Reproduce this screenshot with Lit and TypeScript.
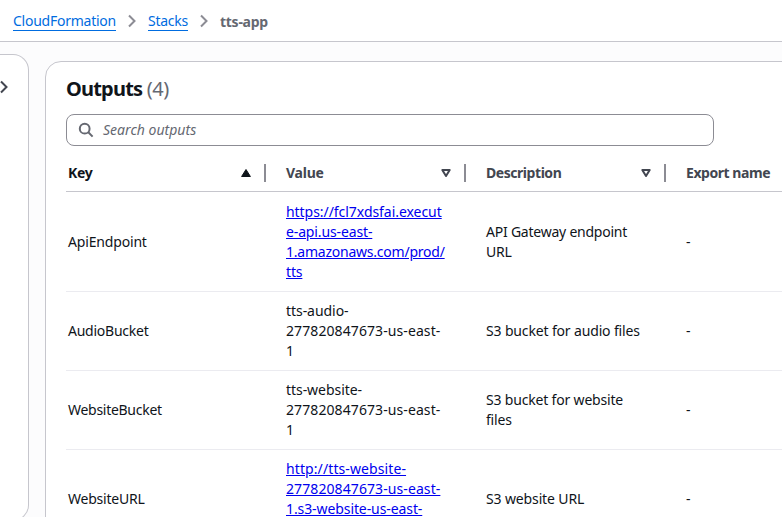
import { LitElement, html, css } from "lit";
import { customElement } from "lit/decorators.js";
import { styleMap } from "lit/directives/style-map.js";

/** A line of cell text with its tracking in px. */
type Line = [text: string, tracking: number];

interface Row {
  key: Line;
  value: Line[];
  link?: boolean;
  description: Line[];
}

const rows: Row[] = [
  {
    key: ["ApiEndpoint", -0.17],
    value: [
      ["https://fcl7xdsfai.execut", -0.05],
      ["e-api.us-east-", -0.13],
      ["1.amazonaws.com/prod/", -0.23],
      ["tts", -0.15],
    ],
    link: true,
    description: [["API Gateway endpoint", -0.23], ["URL", -0.25]],
  },
  {
    key: ["AudioBucket", -0.25],
    value: [["tts-audio-", -0.05], ["277820847673-us-east-", 0.09], ["1", 0]],
    description: [["S3 bucket for audio files", -0.15]],
  },
  {
    key: ["WebsiteBucket", -0.28],
    value: [["tts-website-", -0.05], ["277820847673-us-east-", 0.09], ["1", 0]],
    description: [["S3 bucket for website", -0.18], ["files", -0.2]],
  },
  {
    key: ["WebsiteURL", -0.22],
    value: [
      ["http://tts-website-", 0.1],
      ["277820847673-us-east-", 0.09],
      ["1.s3-website-us-east-", -0.09],
      ["1.amazonaws.com", -0.23],
    ],
    link: true,
    description: [["S3 website URL", -0.13]],
  },
];

const line = ([text, tracking]: Line) =>
  html`<span style=${styleMap({ letterSpacing: `${tracking}px` })}>${text}</span>`;

const lines = (parts: Line[]) => parts.map((p, i) => (i ? html`<br />${line(p)}` : line(p)));

const chevron = html`<svg class="chevron" width="16" height="16" viewBox="0 0 16 16">
  <path d="M5 2.5 L10.5 8 L5 13.5" />
</svg>`;

const sortNone = html`<svg class="sort" width="16" height="16" viewBox="0 0 16 16">
  <path class="hollow" d="M4.3 5 H11.7 L8 11 Z" />
</svg>`;

@customElement("app-root")
export class AppRoot extends LitElement {
  static styles = css`
    :host {
      display: flex;
      flex-direction: column;
      width: 100%;
      height: 517px;
      overflow: hidden;
      background: #fcfcfd;
      color: #0f141a;
      font: 14px/20px "Noto Sans", "Open Sans", sans-serif;
      letter-spacing: -0.25px;
    }
    * { box-sizing: border-box; }
    .crumbs {
      flex: none;
      height: 42px;
      display: flex;
      align-items: center;
      padding: 2px 0 0 13px;
      background: #fff;
      border-bottom: 1px solid #c6c6cd;
    }
    .crumb {
      color: #006ce0;
      text-decoration: none;
      border-bottom: 1px solid #006ce0;
      line-height: 18px;
      white-space: nowrap;
    }
    .current { color: #656871; font-weight: 700; }
    .chevron { fill: none; stroke: #8c8c94; stroke-width: 2; flex: none; }
    .crumbs .chevron { margin: 0 8px 2px; }
    .body { flex: 1; min-height: 0; display: flex; align-items: flex-start; }
    .side {
      flex: none;
      width: 29px;
      height: 467px;
      margin-top: 12px;
      padding-top: 24px;
      background: #fff;
      border: 1px solid #c6c6cd;
      border-left: 0;
      border-radius: 0 16px 16px 0;
    }
    .side .chevron { display: block; margin-left: -4px; stroke: #424650; }
    .card {
      flex: none;
      width: 790px;
      height: 600px;
      margin: 19px 0 0 16px;
      padding: 15px 0 0 20px;
      background: #fff;
      border: 1px solid #c6c6cd;
      border-radius: 16px;
    }
    h2 { margin: 0; font-size: 20px; line-height: 24px; font-weight: 700; letter-spacing: -0.8px; }
    .count { color: #656871; font-weight: 400; letter-spacing: -0.4px; }
    .search {
      display: flex;
      align-items: center;
      width: 648px;
      height: 32px;
      margin-top: 13px;
      padding-left: 11px;
      gap: 9px;
      border: 1px solid #8c8c94;
      border-radius: 8px;
      color: #656871;
      font-style: italic;
      letter-spacing: 0.02px;
    }
    .search svg { fill: none; stroke: #656871; stroke-width: 2; }
    .row {
      display: grid;
      grid-template-columns: 218px 200px 200px 130px;
      align-items: center;
      padding: 9px 0 9px 2px;
      border-bottom: 1px solid #ebebf0;
    }
    .row:nth-child(2) { padding-top: 10px; }
    .row.head {
      height: 46px;
      padding: 18px 0 0 2px;
      border-bottom-color: #c6c6cd;
      align-items: start;
      color: #424650;
      font-weight: 700;
      letter-spacing: -0.45px;
    }
    .th { display: flex; align-items: center; height: 18px; padding-right: 20px; white-space: nowrap; }
    .th.short { letter-spacing: -0.25px; }
    .th .sort { margin-left: auto; margin-right: 10px; }
    .divider { width: 2px; height: 18px; background: #8c8c94; }
    .active { color: #0f141a; }
    .full { fill: #0f141a; stroke: #0f141a; stroke-width: 1; stroke-linejoin: round; }
    .hollow { fill: none; stroke: #424650; stroke-width: 2; stroke-linejoin: round; }
    .cell { white-space: nowrap; }
    .url { color: #0000ee; text-decoration: underline; }
  `;

  render() {
    return html`
      <nav class="crumbs">
        <a class="crumb">CloudFormation</a>${chevron}<a class="crumb">Stacks</a>${chevron}<span class="current">tts-app</span>
      </nav>
      <div class="body">
        <aside class="side">${chevron}</aside>
        <main class="card">
          <h2>Outputs <span class="count">(4)</span></h2>
          <div class="search">
            <svg width="16" height="16" viewBox="0 0 16 16">
              <circle cx="6.7" cy="6.7" r="4.9" /><path d="M10.3 10.3 L14.6 14.6" />
            </svg>
            <span>Search outputs</span>
          </div>
          <div class="table">
            <div class="row head">
              <div class="th short active">
                Key
                <svg class="sort" width="16" height="16" viewBox="0 0 16 16">
                  <path class="full" d="M8 4.5 L12.4 11.5 H3.6 Z" />
                </svg>
                <span class="divider"></span>
              </div>
              <div class="th short">Value ${sortNone}<span class="divider"></span></div>
              <div class="th">Description ${sortNone}<span class="divider"></span></div>
              <div class="th">Export name</div>
            </div>
            ${rows.map(
              (r) => html`<div class="row">
                <div class="cell">${line(r.key)}</div>
                <div class="cell">${r.link ? html`<a class="url">${lines(r.value)}</a>` : lines(r.value)}</div>
                <div class="cell">${lines(r.description)}</div>
                <div class="cell">-</div>
              </div>`
            )}
          </div>
        </main>
      </div>
    `;
  }
}
